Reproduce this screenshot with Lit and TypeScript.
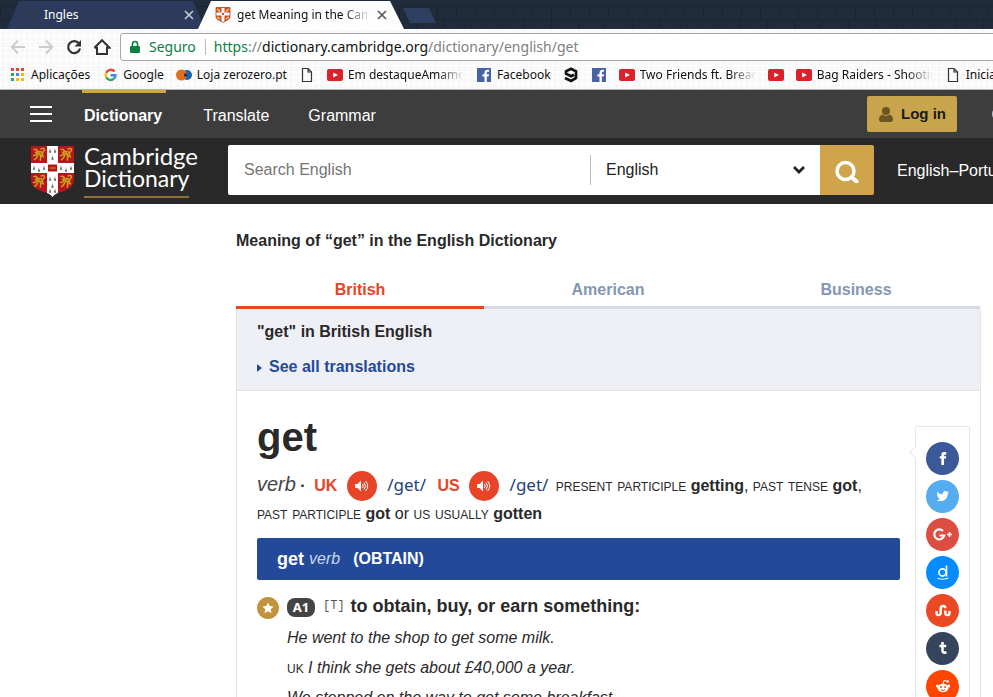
import { LitElement, html, css, svg, nothing } from "lit";
import { customElement, property, state } from "lit/decorators.js";
import { classMap } from "lit/directives/class-map.js";

const F_PATH =
  "M9 8h-3v4h3v12h5v-12h3.642l.358-4h-4v-1.667c0-.955.192-1.333 1.115-1.333h2.885v-5h-3.808c-3.596 0-5.192 1.583-5.192 4.615v3.385z";
const BIRD_PATH =
  "M23.953 4.57a10 10 0 01-2.825.775 4.958 4.958 0 002.163-2.723c-.951.555-2.005.959-3.127 1.184a4.92 4.92 0 00-8.384 4.482C7.69 8.095 4.067 6.13 1.64 3.162a4.822 4.822 0 00-.666 2.475c0 1.71.87 3.213 2.188 4.096a4.904 4.904 0 01-2.228-.616v.06a4.923 4.923 0 003.946 4.827 4.996 4.996 0 01-2.212.085 4.936 4.936 0 004.604 3.417 9.867 9.867 0 01-6.102 2.105c-.39 0-.779-.023-1.17-.067a13.995 13.995 0 007.557 2.209c9.053 0 13.998-7.496 13.998-13.985 0-.21 0-.42-.015-.63A9.935 9.935 0 0024 4.59z";

const lion = (x: number, y: number) => svg`
  <g transform="translate(${x} ${y})" fill="none" stroke="#c9a020" stroke-width="1.5" stroke-linecap="round">
    <path d="M2 2.500h2.500l1 2-2 1M5 4.500c2 0 4-.5 5 1s0 3 1.500 4.500M5 5.500c0 2-1 3-3.500 3M6 8c-1 2-1.500 4-3.500 4.500M10 9c-1.500 1-2 2-1.500 4M9 2c2-1 3.500-.5 3.500 1s-1.500 1-1.500 2.500M4.500 6.500l5 1M7 6l2 4"/>
  </g>`;

const ermine = (x: number, y: number) => svg`
  <path transform="translate(${x} ${y})" d="M1 0v1.500L0 4.500h2L1 1.500" fill="#444" stroke="#444" stroke-width=".2"/>`;

const shield = html`<svg class="shield" viewBox="0 0 45 52" aria-hidden="true">
  <defs><clipPath id="sh"><path d="M1 1h43v34c0 7-7 10-13 12-4 1-6 2-8.500 5-2.500-3-4.500-4-8.500-5-6-2-13-5-13-12z"/></clipPath></defs>
  <g clip-path="url(#sh)">
    <path fill="#b8161c" d="M0 0h45v52H0z"/>
    ${lion(2, 2)} ${lion(29, 2)} ${lion(2, 29)} ${lion(29, 29)}
    <path fill="#fff" d="M17 0h11v52H17zM0 18h45v10H0z"/>
    ${ermine(19, 3)} ${ermine(24, 3)} ${ermine(21.5, 10)}
    ${ermine(3, 20)} ${ermine(8, 22)} ${ermine(13, 20)}
    ${ermine(30, 20)} ${ermine(35, 22)} ${ermine(40, 20)}
    ${ermine(19, 31)} ${ermine(24, 31)} ${ermine(21.5, 38)} ${ermine(19, 43)} ${ermine(24, 43)}
    <path fill="#b8161c" d="M18 19.500h9v7h-9z"/><path d="M19.500 23h6" stroke="#c9a020"/>
  </g>
</svg>`;

const miniShield = html`<svg width="16" height="16" viewBox="0 0 16 16" aria-hidden="true">
  <path d="M1 .5h14v9c0 3-4 4-7 6-3-2-7-3-7-6z" fill="#d5452a"/>
  <path d="M6.500 .5h3v14.500l-1.500 1-1.500-1zM1 5.500h14v3H1z" fill="#fff"/>
  <path d="M2 2l3 2.500M11 4.500l3-2.500M2 10l3 2M11 12l3-2" stroke="#edbd4a" stroke-width="1.800"/>
  <path d="M7 6h2v2H7z" fill="#d5452a"/>
  <path d="M1 .5h14v9c0 3-4 4-7 6-3-2-7-3-7-6z" fill="none" stroke="#9c4b2c" stroke-width=".8"/></svg>`;

const doc = (color: string) => html`<svg width="16" height="16" viewBox="0 0 16 16" aria-hidden="true">
  <path d="M3.500 1.500h5.500l3.500 3.500v9.500h-9zM9 1.500v3.500h3.500" fill="none" stroke=${color} stroke-width="1.200"/></svg>`;

const tube = html`<svg width="16" height="16" viewBox="0 0 16 16" aria-hidden="true">
  <rect y="2" width="16" height="12" rx="2" fill="#d9222a"/><path d="M6.200 5.500v5L11 8z" fill="#fff"/></svg>`;

const face = html`<svg width="16" height="16" viewBox="0 0 16 16" aria-hidden="true">
  <path fill="#4862a3" d="M1 1h14v14H1z"/>
  <path fill="#fff" d="M8.500 15V9.500H6.500V7.300h2V6c0-2.100 1.200-3.200 3-3.200.9 0 1.500.1 1.500.1v1.900h-1c-1 0-1.200.6-1.200 1.200v1.300h2.200l-.4 2.200h-1.800V15z"/></svg>`;

const nine = html`<svg width="16" height="16" viewBox="0 0 16 16" aria-hidden="true">
  <path d="M13 11.800V4.300L8 1.800 3 4.300v2.400L8 9.200l3-1.500M13 11L8 14 2 11" fill="none" stroke="#111" stroke-width="2.700"/></svg>`;

const gLogo = html`<svg width="16" height="16" viewBox="0 0 16 16" fill="none" stroke-width="2.400" aria-hidden="true">
  <path d="M12.500 4.500A5 5 0 0 0 4.200 5.700" stroke="#ea4335"/><path d="M4.200 5.700a5 5 0 0 0 0 4.600" stroke="#fbbc05"/>
  <path d="M4.200 10.300A5 5 0 0 0 11.900 11.700" stroke="#34a853"/><path d="M11.900 11.700A5 5 0 0 0 13.500 8.200H8.500" stroke="#4285f4"/></svg>`;

const apps = html`<svg width="16" height="16" viewBox="0 0 16 16" aria-hidden="true">
  ${["#ea4335", "#ea4335", "#ea4335", "#34a853", "#4285f4", "#fbbc05", "#34a853", "#fbbc05", "#fbbc05"].map(
    (c, i) => svg`<rect x=${1 + (i % 3) * 5} y=${1 + Math.floor(i / 3) * 5} width="3" height="3" fill=${c}/>`
  )}</svg>`;

const balls = html`<svg width="16" height="16" viewBox="0 0 16 16" aria-hidden="true">
  <circle cx="11" cy="8" r="5" fill="#1466a8"/><circle cx="5.500" cy="8" r="5.500" fill="#e0701f"/>
  <path d="M8 6.500h3v3H8z" fill="#2c2f5c"/></svg>`;

const cross = html`<svg width="10" height="10" viewBox="0 0 10 10" aria-hidden="true">
  <path d="M1 1l8 8M9 1l-8 8" stroke="currentColor" stroke-width="1.600"/></svg>`;

interface Bookmark {
  icon: unknown;
  label?: string;
  fade?: boolean;
  name: string;
}

const BOOKMARKS: Bookmark[] = [
  { icon: apps, label: "Aplicações", name: "Aplicações" },
  { icon: gLogo, label: "Google", name: "Google" },
  { icon: balls, label: "Loja zerozero.pt", name: "Loja zerozero.pt" },
  { icon: doc("#333"), name: "Page" },
  { icon: tube, label: "Em destaqueAmamos", fade: true, name: "Em destaque" },
  { icon: face, label: "Facebook", name: "Facebook" },
  { icon: nine, name: "9GAG" },
  { icon: face, name: "Facebook" },
  { icon: tube, label: "Two Friends ft. Breach", fade: true, name: "Two Friends" },
  { icon: tube, name: "YouTube" },
  { icon: tube, label: "Bag Raiders - Shooting", fade: true, name: "Bag Raiders" },
  { icon: doc("#333"), label: "Iniciar", name: "Iniciar" },
];

@customElement("browser-frame")
export class BrowserFrame extends LitElement {
  static styles = css`
    :host { display: block; flex: none; font: 12px/16px "Noto Sans", sans-serif; color: #111; overflow: hidden; }
    svg { display: block; flex: none; }
    button { border: 0; padding: 0; background: none; color: inherit; display: grid; place-items: center; }
    .strip {
      display: flex; height: 29px; padding-left: 7px; align-items: flex-end;
      background:
        repeating-linear-gradient(90deg, #1a2433 0 1px, transparent 1px 19px) 0 7px / 100% 12px no-repeat,
        repeating-linear-gradient(90deg, transparent 0 11px, #1a2433 11px 12px, transparent 12px 27px) 0 20px / 100% 9px no-repeat,
        repeating-linear-gradient(180deg, transparent 0 6px, #1a2433 6px 7px, transparent 7px 13px),
        #202b3b;
    }
    .tab {
      display: flex; align-items: center; height: 28px; flex: 0 0 198px; min-width: 0; box-sizing: border-box;
      padding: 0 11px 0 15px; background: #2c3b5b; color: #fff;
      clip-path: polygon(0 100%, 12px 0, 186px 0, 100% 100%);
    }
    .tab .name { flex: 1; min-width: 0; margin-left: 6px; white-space: nowrap; overflow: hidden; }
    .tab button { color: #c5cad6; width: 10px; height: 16px; }
    .tab.front {
      flex-basis: 206px; margin-left: -7px; background: #fdfdfd; color: #111; padding: 0 17px;
      clip-path: polygon(0 100%, 13px 0, 192px 0, 100% 100%);
    }
    .tab.front button { color: #555; }
    .tab.front .name { margin: 0 7px 0 6px; }
    .fade { -webkit-mask-image: linear-gradient(90deg, #000 calc(100% - 26px), transparent); mask-image: linear-gradient(90deg, #000 calc(100% - 26px), transparent); }
    .plus { width: 33px; height: 15px; margin: 0 0 6px -1px; background: #2f3f62; clip-path: polygon(0 0, 26px 0, 100% 100%, 7px 100%); }
    .tools {
      background:
        repeating-linear-gradient(90deg, #fff 0 1px, transparent 1px 6px),
        repeating-linear-gradient(180deg, #fff 0 1px, transparent 1px 6px),
        #f8f8f8;
      border-bottom: 1px solid #b5b5b5;
    }
    .nav { display: flex; align-items: center; padding: 4px 0 0 4px; }
    .nav > button { width: 28px; height: 28px; }
    .box {
      flex: 1; display: flex; align-items: center; height: 28px; box-sizing: border-box; margin: 0 -4px 0 4px;
      border: 1px solid #a6a6a6; border-radius: 3px; background: #fff; padding-left: 8px;
      font-size: 14px; line-height: 20px; white-space: nowrap;
    }
    .safe { color: #0b8043; padding: 0 9px 0 8px; border-right: 1px solid #bbb; line-height: 16px; margin-right: 8px; }
    .url { color: #808080; }
    .url b { font-weight: 400; color: #0b8043; }
    .url i { font-style: normal; color: #111; }
    .marks { display: flex; gap: 12px; height: 28px; align-items: center; padding-left: 10px; overflow: hidden; }
    .marks a { flex: none; display: flex; align-items: center; gap: 5px; color: inherit; text-decoration: none; white-space: nowrap; }
    .marks .fade { width: 116px; overflow: hidden; }
  `;

  render() {
    return html`
      <div class="strip">
        <div class="tab">${doc("#333a48")}<span class="name">Ingles</span><button aria-label="Close tab">${cross}</button></div>
        <div class="tab front">${miniShield}<span class="name fade">get Meaning in the Cambridge</span><button aria-label="Close tab">${cross}</button></div>
        <button class="plus" aria-label="New tab"></button>
      </div>
      <div class="tools">
        <div class="nav">
          <button aria-label="Back"><svg width="16" height="16" viewBox="0 0 16 16" fill="none" stroke="#ccc" stroke-width="2"><path d="M15 8H2M8 1.500L1.800 8 8 14.500"/></svg></button>
          <button aria-label="Forward"><svg width="16" height="16" viewBox="0 0 16 16" fill="none" stroke="#ccc" stroke-width="2"><path d="M1 8h13M8 1.500L14.200 8 8 14.500"/></svg></button>
          <button aria-label="Reload"><svg width="16" height="16" viewBox="0 0 16 16"><path d="M13 4.500A6 6 0 1 0 14 9.500" fill="none" stroke="#333" stroke-width="2.200"/><path d="M15 1v6.500H8.500z" fill="#333"/></svg></button>
          <button aria-label="Home"><svg width="18" height="18" viewBox="0 0 18 18" fill="none" stroke="#333" stroke-width="2"><path d="M4 9v7h10V9M1.500 9.700L9 2.200l7.500 7.500H13"/><path d="M1.500 9.700H5"/></svg></button>
          <div class="box">
            <svg width="12" height="14" viewBox="0 0 12 14"><path d="M2 6h8a1 1 0 0 1 1 1v5a1 1 0 0 1-1 1H2a1 1 0 0 1-1-1V7a1 1 0 0 1 1-1z" fill="#0b8043"/><path d="M3.500 6V4a2.500 2.500 0 0 1 5 0v2" fill="none" stroke="#0b8043" stroke-width="1.600"/></svg>
            <span class="safe">Seguro</span>
            <span class="url"><b>https</b>://<i>dictionary.cambridge.org</i>/dictionary/english/get</span>
          </div>
        </div>
        <nav class="marks">
          ${BOOKMARKS.map(
            (b) => html`<a href="#" aria-label=${b.name}>${b.icon}${b.label
              ? html`<span class=${classMap({ fade: !!b.fade })}>${b.label}</span>`
              : nothing}</a>`
          )}
        </nav>
      </div>`;
  }
}

@customElement("site-header")
export class SiteHeader extends LitElement {
  static styles = css`
    :host { display: block; font: 16px/20px "Liberation Sans", Arial, sans-serif; color: #fff; overflow: hidden; }
    svg { display: block; flex: none; }
    button { border: 0; padding: 0; background: none; font: inherit; color: inherit; }
    a { color: inherit; text-decoration: none; white-space: nowrap; }
    .top { display: flex; height: 48px; padding-left: 30px; background: #3d3d3d; align-items: center; }
    .links { display: flex; align-self: stretch; margin-left: 30px; gap: 35px; flex: 1; }
    .links a { border-top: 3px solid transparent; padding: 13px 2px 0; }
    .links a:first-child { font-weight: 700; border-color: #cfa44b; padding-right: 4px; }
    .login {
      display: flex; align-items: center; gap: 8px; height: 36px; width: 90px; padding-left: 12px; box-sizing: border-box;
      border-radius: 2px; background: #c8a54c; color: #1d1a12; font-size: 15px; font-weight: 700; white-space: nowrap;
    }
    .ring { width: 16px; height: 16px; flex: none; margin: 0 -14px 0 34px; }
    .main { display: flex; align-items: center; height: 66px; box-sizing: border-box; padding: 0 0 2px 30px; background: #292929; }
    .brand { display: flex; gap: 9px; flex: 0 0 198px; align-items: center; padding-top: 2px; box-sizing: border-box; }
    .shield { width: 45px; height: 52px; }
    .word { font: 24px/22px Lato, sans-serif; }
    .word .low { display: table; font-size: 23px; border-bottom: 2px solid #8d7139; padding-bottom: 7px; }
    .search { display: flex; flex: 1 1 646px; max-width: 646px; min-width: 0; height: 50px; }
    .field { flex: 1; display: flex; align-items: center; background: #fff; border-radius: 2px 0 0 2px; color: #222; min-width: 0; }
    input { flex: 1; min-width: 0; border: 0; outline: 0; background: none; font: inherit; padding: 0 16px; color: #222; }
    input::placeholder { color: #757575; opacity: 1; }
    .pick { display: flex; align-items: center; flex: 0 0 230px; height: 30px; border-left: 1px solid #bfbfbf; box-sizing: border-box; padding-right: 14px; }
    select { appearance: none; flex: 1; border: 0; background: none; font: inherit; color: #222; padding: 0 0 0 15px; outline: 0; }
    .go { width: 54px; background: #cfa44b; border-radius: 0 2px 2px 0; display: grid; place-items: center; }
    .pair { flex: none; margin: 2px -80px 0 23px; }
  `;

  render() {
    return html`
      <div class="top">
        <button aria-label="Menu"><svg width="22" height="16" viewBox="0 0 22 16"><path d="M0 0h22v2H0zM0 7h22v2H0zM0 14h22v2H0z" fill="#fff"/></svg></button>
        <nav class="links"><a href="#">Dictionary</a><a href="#">Translate</a><a href="#">Grammar</a></nav>
        <button class="login">
          <svg width="14" height="15" viewBox="0 0 14 15" fill="#6b5522"><circle cx="7" cy="4" r="4"/><path d="M3.500 7.500a5 5 0 0 0 7 0C13 8 14 10 14 12.500c0 1.500-1 2.500-2.500 2.500h-9C1 15 0 14 0 12.500 0 10 1 8 3.500 7.500z"/></svg>
          Log in
        </button>
        <svg class="ring" viewBox="0 0 16 16"><circle cx="8" cy="8" r="6" fill="none" stroke="#b9c4d2" stroke-width="2"/></svg>
      </div>
      <div class="main">
        <a class="brand" href="#">${shield}<span class="word">Cambridge<span class="low">Dictionary</span></span></a>
        <form class="search">
          <div class="field">
            <input type="text" placeholder="Search English" aria-label="Search English" />
            <div class="pick">
              <select aria-label="Dictionary"><option>English</option></select>
              <svg width="14" height="10" viewBox="0 0 14 10"><path d="M2 2l5 5 5-5" fill="none" stroke="#222" stroke-width="2.800"/></svg>
            </div>
          </div>
          <button class="go" type="button" aria-label="Search">
            <svg width="26" height="26" viewBox="0 0 26 26" fill="none" stroke="#fff"><circle cx="11.500" cy="14" r="8.500" stroke-width="3.500"/><path d="M18 20.500l4.500 4" stroke-width="4.200" stroke-linecap="round"/></svg>
          </button>
        </form>
        <a class="pair" href="#">English–Portuguese</a>
      </div>`;
  }
}

const SHARES: { name: string; color: string; icon: unknown }[] = [
  { name: "Facebook", color: "#3b5998", icon: svg`<path d=${F_PATH} transform="translate(4.500 4) scale(.54)" fill="#fff"/>` },
  { name: "Twitter", color: "#55acee", icon: svg`<path d=${BIRD_PATH} transform="translate(4.500 4) scale(.52)" fill="#fff"/>` },
  { name: "Google Plus", color: "#dc4e41", icon: svg`<path d="M11 7A5 5 0 1 0 12.200 11.500H7.500" fill="none" stroke="#fff" stroke-width="2.200"/><path d="M17.500 8v5M15 10.500h5" stroke="#fff" stroke-width="1.600"/>` },
  { name: "Diigo", color: "#048cff", icon: svg`<circle cx="10.500" cy="10.500" r="3.600" fill="none" stroke="#fff" stroke-width="1.600"/><path d="M14.500 3.500v11" stroke="#fff" stroke-width="1.600"/><path d="M5.500 16.500q5 1.800 11-.3" fill="none" stroke="#fff"/>` },
  { name: "StumbleUpon", color: "#eb4924", icon: svg`<path d="M4.500 11v2a2 2 0 0 0 4.200 0V8.300a2.300 2.300 0 0 1 4.600 0M13.300 10.500v2.500a2 2 0 0 0 4.200 0v-2" fill="none" stroke="#fff" stroke-width="2.400"/>` },
  { name: "Tumblr", color: "#35465c", icon: svg`<path d="M10.500 4v8.500c0 2 1.500 2.700 4 1.800M7.500 8h6.700" fill="none" stroke="#fff" stroke-width="2.600"/>` },
  { name: "Reddit", color: "#ff4500", icon: svg`<ellipse cx="11" cy="12" rx="5.500" ry="4.200" fill="#fff"/><circle cx="5.300" cy="10" r="1.500" fill="#fff"/><circle cx="16.700" cy="10" r="1.500" fill="#fff"/><path d="M11 8.500l1-4 3 .8" fill="none" stroke="#fff"/><circle cx="15.700" cy="5.500" r="1.200" fill="#fff"/><circle cx="8.900" cy="11" r="1" fill="#ff4500"/><circle cx="13.100" cy="11" r="1" fill="#ff4500"/><path d="M8.800 13.700q2.200 1.500 4.400 0" stroke="#ff4500" fill="none"/>` },
];

@customElement("share-bar")
export class ShareBar extends LitElement {
  static styles = css`
    :host { display: block; flex: none; }
    .bar {
      position: relative; display: flex; flex-direction: column; align-items: center; gap: 5px;
      padding: 15px 0; width: 53px; border: 1px solid #e5e6ea; border-radius: 2px; background: #fff;
    }
    .bar::before {
      content: ""; position: absolute; left: -5px; top: 21px; width: 8px; height: 8px; background: #fff;
      border: solid #e5e6ea; border-width: 0 0 1px 1px; transform: rotate(45deg);
    }
    .dot { width: 33px; height: 33px; border-radius: 50%; display: grid; place-items: center; }
  `;

  render() {
    return html`<div class="bar">
      ${SHARES.map(
        (s) => html`<a class="dot" href="#" aria-label=${s.name} style="background:${s.color}">
          <svg width="22" height="22" viewBox="0 0 22 22">${s.icon}</svg></a>`
      )}
    </div>`;
  }
}

@customElement("dictionary-entry")
export class DictionaryEntry extends LitElement {
  @property({ type: String }) word = "get";
  @state() private tab = "British";

  static styles = css`
    :host { display: block; margin: 0 12px 0 236px; padding-top: 27px; font: 16px/20px "Liberation Sans", Arial, sans-serif; color: #292929; }
    h1, h2, h3, p { margin: 0; font-size: 16px; }
    button { border: 0; padding: 0; background: none; font: inherit; color: inherit; }
    a { color: inherit; text-decoration: none; }
    .tabs { display: flex; margin: 28px 1px 0 0; }
    .tabs button { flex: 1; height: 30px; padding-bottom: 5px; font-weight: 700; color: #8496b4; border-bottom: 3px solid #d5dae3; }
    .tabs button.on { color: #e84427; border-color: #e84427; }
    .card { border: solid #e3e4e8; border-width: 0 1px; }
    .head { background: #eff0f6; border-bottom: 1px solid #e3e4e8; padding: 13px 20px; }
    .all { display: flex; align-items: center; gap: 6px; margin-top: 15px; color: #234a99; font-weight: 700; }
    .body { display: flex; gap: 15px; padding: 23px 10px 0 20px; }
    .text { flex: 1; min-width: 0; }
    share-bar { margin-top: 12px; }
    .word { font-size: 40px; line-height: 46px; }
    .info { margin-top: 13px; line-height: 26px; }
    .info em { font-size: 20px; line-height: 20px; color: #444; }
    .info > span { white-space: nowrap; }
    .zone { color: #e84427; margin-left: 4px; }
    .play { display: inline-grid; place-items: center; width: 30px; height: 30px; border-radius: 50%; background: #e84427; vertical-align: middle; margin: -2px 6px 0 5px; }
    .ipa { font: 17px/20px "Noto Sans", sans-serif; color: #233f78; margin-right: 3px; }
    .caps { font-variant: small-caps; font-size: 17px; line-height: 20px; }
    .sense { display: flex; align-items: center; gap: 5px; height: 42px; margin-top: 11px; padding-left: 20px; background: #234a99; color: #fff; border-radius: 2px; }
    .sense b { font-size: 18px; }
    .sense i { color: #ccd6ee; }
    .sense span { font-weight: 700; margin-left: 8px; }
    .def { display: flex; align-items: center; gap: 8px; margin-top: 13px; line-height: 24px; }
    .star { width: 22px; height: 22px; border-radius: 50%; background: #c1933a; display: grid; place-items: center; margin-top: 4px; }
    .level { width: 28px; height: 19px; border-radius: 8px; background: #444; color: #fff; font: 700 13px/19px "Noto Sans", sans-serif; text-align: center; margin-top: 3px; }
    .code { font: 12px/24px "Liberation Mono", monospace; color: #555; }
    .def h3 { font-size: 18px; margin-left: -2px; }
    .eg { margin-left: 30px; line-height: 30px; font-style: italic; padding-top: 4px; }
    .eg .caps { font-style: normal; }
  `;

  private play() {
    return html`<button class="play" aria-label="Listen"><svg width="16" height="14" viewBox="0 0 16 14" fill="none" stroke="#fff">
      <path d="M1 5h2.500L7 1.500v11L3.500 9H1z" fill="#fff" stroke="none"/><path d="M8.500 5q1.500 2 0 4M10 3.500q3 3.500 0 7M11.500 2q4.500 5 0 10"/></svg></button>`;
  }

  render() {
    return html`
      <h1>Meaning of “${this.word}” in the English Dictionary</h1>
      <div class="tabs">
        ${["British", "American", "Business"].map(
          (t) => html`<button class=${classMap({ on: t === this.tab })} @click=${() => (this.tab = t)}>${t}</button>`
        )}
      </div>
      <div class="card">
        <div class="head">
          <h2>"${this.word}" in ${this.tab} English</h2>
          <a class="all" href="#"><svg width="6" height="10" viewBox="0 0 6 10"><path d="M0 2l5 4-5 4z" fill="#234a99"/></svg>See all translations</a>
        </div>
        <div class="body">
          <div class="text">
            <h2 class="word">${this.word}</h2>
            <p class="info">
              <em>verb</em> <b>·</b> <b class="zone">UK</b> ${this.play()} <span class="ipa">/get/</span>
              <b class="zone">US</b> ${this.play()} <span class="ipa">/get/</span>
              <span class="caps">present participle</span> <b>getting</b>, <span class="caps">past tense</span> <b>got</b>,
              <span class="caps">past participle</span> <b>got</b> or <span class="caps">us usually</span> <b>gotten</b>
            </p>
            <div class="sense"><b>${this.word}</b><i>verb</i><span>(OBTAIN)</span></div>
            <div class="def">
              <span class="star"><svg width="12" height="12" viewBox="0 0 12 12"><path d="M6 .5l1.700 3.600 3.900.5-2.900 2.700.8 3.900L6 9.300l-3.500 1.900.8-3.900L.4 4.600l3.900-.5z" fill="#fff"/></svg></span>
              <span class="level">A1</span><span class="code">[T]</span>
              <h3>to obtain, buy, or earn something:</h3>
            </div>
            <div class="eg">
              <p>He went to the shop to get some milk.</p>
              <p><span class="caps">uk</span> I think she gets about £40,000 a year.</p>
              <p>We stopped on the way to get some breakfast.</p>
            </div>
          </div>
          <share-bar></share-bar>
        </div>
      </div>`;
  }
}

@customElement("app-root")
export class AppRoot extends LitElement {
  static styles = css`
    :host { display: flex; flex-direction: column; height: 100vh; overflow: hidden; background: #fff; }
    .view { flex: 1; min-height: 0; overflow: hidden; }
  `;

  render() {
    return html`<browser-frame></browser-frame>
      <div class="view"><site-header></site-header><dictionary-entry></dictionary-entry></div>`;
  }
}
